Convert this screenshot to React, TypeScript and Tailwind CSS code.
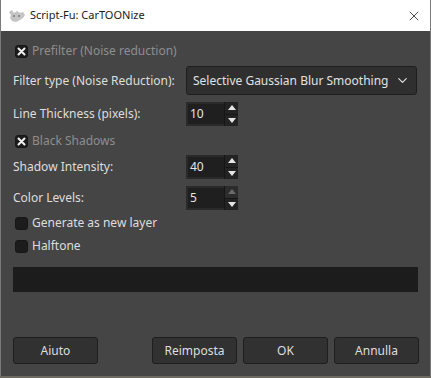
import { ChevronDown, X } from "lucide-react";

const font = { fontFamily: '"Noto Sans", "DejaVu Sans", sans-serif' };

function Check({ checked }: { checked?: boolean }) {
  return (
    <span className="w-[13px] h-[13px] rounded-[3px] bg-[#1c1c1c] border border-[#161616] flex items-center justify-center shrink-0">
      {checked && (
        <svg width="9" height="9" viewBox="0 0 9 9">
          <path d="M1.5 1.5 L7.5 7.5 M7.5 1.5 L1.5 7.5" stroke="#f2f2f2" strokeWidth="2" strokeLinecap="round" />
        </svg>
      )}
    </span>
  );
}

function CheckRow({ label, checked, disabled }: { label: string; checked?: boolean; disabled?: boolean }) {
  return (
    <div className="h-[18px] flex items-center gap-[4px] pl-[2px]">
      <Check checked={checked} />
      <span className={disabled ? "text-[#8e8e8e]" : "text-[#dedede]"}>{label}</span>
    </div>
  );
}

function Arrow({ up, dim }: { up?: boolean; dim?: boolean }) {
  return (
    <svg width="8" height="5" viewBox="0 0 8 5">
      <path d={up ? "M0 5 L4 0 L8 5 Z" : "M0 0 L4 5 L8 0 Z"} fill={dim ? "#6a6a6a" : "#e6e6e6"} />
    </svg>
  );
}

function Spin({ value, upDisabled }: { value: string; upDisabled?: boolean }) {
  return (
    <div className="w-[52px] h-[24px] flex bg-[#2a2a2a]">
      <div className="flex-1 m-[2px] mr-0 bg-[#1f1f1f] flex items-center pl-[2px] text-[#e6e6e6]">{value}</div>
      <div className="w-[14px] flex flex-col bg-[#232323] border-l border-[#161616]">
        <div className={"flex-1 flex items-center justify-center border-b border-[#161616] " + (upDisabled ? "bg-[#2c2c2c]" : "")}>
          <Arrow up dim={upDisabled} />
        </div>
        <div className="flex-1 flex items-center justify-center">
          <Arrow />
        </div>
      </div>
    </div>
  );
}

function Row({ label, children, className }: { label: string; children: React.ReactNode; className?: string }) {
  return (
    <div className={"flex items-center " + (className ?? "")}>
      <span className="w-[173px] text-[#dedede]">{label}</span>
      {children}
    </div>
  );
}

export default function App() {
  return (
    <div className="w-[431px] h-[378px] bg-[#6d6a62] text-[12px]" style={font}>
      <div className="w-[431px] h-[376px] flex flex-col border-l border-r border-[#7a7a7a] bg-[#454545]">
        <div className="h-[31px] bg-white flex items-center pl-[7px] pr-[8px] shrink-0">
          <svg width="18" height="14" viewBox="0 0 18 14" className="mr-[4px]">
            <path d="M1 3 L4 1 L6 4 L9 2 L12 4 L15 3 L17 6 L15 9 L12 11 L8 13 L4 12 L2 9 L3 6 Z" fill="#c4c4c4" />
            <path d="M5 6 h2 v2 h-2 Z M10 6 h2 v2 h-2 Z" fill="#8d8d8d" />
          </svg>
          <span className="text-[#1a1a1a] text-[11px]">Script-Fu: CarTOONize</span>
          <X className="ml-auto text-[#202020]" size={16} strokeWidth={1.2} />
        </div>

        <div className="flex flex-col pl-[12px] pr-[12px]">
          <div className="mt-[11px]">
            <CheckRow label="Prefilter (Noise reduction)" checked disabled />
          </div>
          <Row label="Filter type (Noise Reduction):" className="mt-[6px]">
            <div className="w-[231px] h-[29px] rounded-[3px] bg-[#2f2f2f] border border-[#1e1e1e] flex items-center pl-[6px] pr-[6px] text-[#e2e2e2]">
              <span>Selective Gaussian Blur Smoothing</span>
              <ChevronDown className="ml-auto text-[#e6e6e6]" size={15} strokeWidth={1.8} />
            </div>
          </Row>
          <Row label="Line Thickness (pixels):" className="mt-[7px]">
            <Spin value="10" />
          </Row>
          <div className="mt-[6px]">
            <CheckRow label="Black Shadows" checked disabled />
          </div>
          <Row label="Shadow Intensity:" className="mt-[5px]">
            <Spin value="40" />
          </Row>
          <Row label="Color Levels:" className="mt-[7px]">
            <Spin value="5" upDisabled />
          </Row>
          <div className="mt-[4px]">
            <CheckRow label="Generate as new layer" />
          </div>
          <div className="mt-[5px]">
            <CheckRow label="Halftone" />
          </div>
          <div className="mt-[12px] h-[25px] w-[405px] bg-[#1c1c1c]" />
        </div>

        <div className="mt-auto mb-[12px] flex pl-[12px] gap-[6px] text-[#dedede]">
          <button className="w-[85px] h-[27px] rounded-[3px] bg-[#313131] border border-[#1e1e1e]">Aiuto</button>
          <button className="ml-[48px] w-[85px] h-[27px] rounded-[3px] bg-[#313131] border border-[#1e1e1e]">Reimposta</button>
          <button className="w-[85px] h-[27px] rounded-[3px] bg-[#313131] border border-[#1e1e1e]">OK</button>
          <button className="w-[85px] h-[27px] rounded-[3px] bg-[#313131] border border-[#1e1e1e]">Annulla</button>
        </div>
      </div>
    </div>
  );
}
